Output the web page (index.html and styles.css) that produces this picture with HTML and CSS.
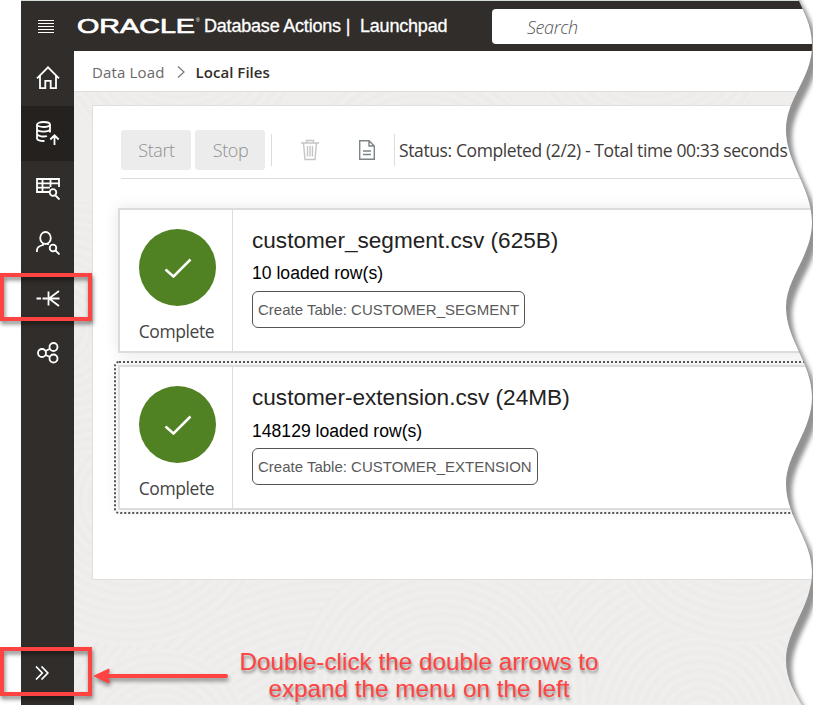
FILE: index.html
```html
<!DOCTYPE html>
<html lang="en">
<head>
<meta charset="utf-8">
<title>Database Actions | Launchpad</title>
<link rel="stylesheet" href="styles.css">
</head>
<body>
<div class="app">
  <header class="topbar">
    <svg class="burger" viewBox="0 0 16 14"><path d="M0 1.500h16M0 4.500h16M0 7.500h16M0 10.500h16M0 13.500h16" stroke="#fff" stroke-width="1"/></svg>
    <svg class="logo" viewBox="0 0 124 24"><text class="logo-text" x="0" y="19" textLength="118" lengthAdjust="spacingAndGlyphs">ORACLE</text><text class="logo-reg" x="119" y="8">®</text></svg>
    <span class="product">Database Actions |</span>
    <span class="page-name">Launchpad</span>
    <div class="search"><span>Search</span></div>
  </header>
  <div class="body">
    <nav class="sidebar">
      <div class="nav-item"><svg viewBox="0 0 24 24"><path d="M1 12.300 12 1.300l11 11M4 10v12.200h5.300v-7.400h5.400v7.400H20V10"/></svg></div>
      <div class="nav-item active"><svg viewBox="0 0 24 24"><ellipse cx="7.500" cy="3.500" rx="6.500" ry="2.500"/><path d="M1 3.500v14c0 1.700 3 2.600 7.500 2.500M14 3.500v8M1 8.300c1 3 12 3 13 0M1 13c1 2.500 7 3 10 2M18.500 24v-9.500M14.300 18.500l4.200-4.200 4.200 4.200"/></svg></div>
      <div class="nav-item"><svg viewBox="0 0 24 24"><path d="M13 16H1V3h22v8M1 7.300h22M1 11.700h13M6.500 3v13M14.500 3v8M19.500 19.500l4 4"/><circle cx="17" cy="16.500" r="3.300"/></svg></div>
      <div class="nav-item"><svg viewBox="0 0 24 24"><ellipse cx="9.500" cy="7" rx="5.300" ry="6"/><path d="M1 21v-2c0-3 2-4 6-5v-1.700M12 12.300V14M19.500 19.500l4 4"/><circle cx="17" cy="17" r="3.300"/></svg></div>
      <div class="nav-item"><svg viewBox="0 0 24 24"><path d="M.5 12.500h4.500M6.500 12.500h5M12.500 5.500v14M12.500 12.500h11M23 5 13 12.500 23 20"/></svg></div>
      <div class="nav-item"><svg viewBox="0 0 24 24"><circle cx="6" cy="12" r="4"/><circle cx="17.500" cy="6" r="4"/><circle cx="17.500" cy="17.500" r="4"/><path d="M9.500 10 14 7.800M9.500 14l4.500 2"/></svg></div>
      <div class="expander"><svg viewBox="0 0 14 14"><path d="M1 .5 7.300 7 1 13.500M6.500 .5 12.800 7l-6.300 6.500"/></svg></div>
    </nav>
    <main class="main">
      <svg class="texture" viewBox="74 92 739 613">
        <defs>
          <radialGradient id="rings" gradientUnits="userSpaceOnUse" cx="0" cy="0" r="9" spreadMethod="repeat">
            <stop offset="0" stop-color="#f0efee"/><stop offset=".5" stop-color="#ecebea"/><stop offset="1" stop-color="#f0efee"/>
          </radialGradient>
        </defs>
        <g fill="url(#rings)">
          <circle r="300" transform="translate(330 820)"/>
          <circle r="270" transform="translate(560 790)"/>
          <circle r="190" transform="translate(700 720)"/>
          <circle r="145" transform="translate(130 500)"/>
          <circle r="145" transform="translate(740 500)"/>
          <circle r="150" transform="translate(440 700)"/>
          <circle r="90" transform="translate(160 740)"/>
          <circle r="130" transform="translate(60 330)"/>
          <circle r="130" transform="translate(180 30)"/>
          <circle r="130" transform="translate(420 190)"/>
          <circle r="130" transform="translate(650 20)"/>
        </g>
      </svg>
      <div class="crumbs"><span>Data Load</span><svg viewBox="0 0 8 12"><path d="M1 .5 7 6l-6 5.500"/></svg><b>Local Files</b></div>
      <section class="panel">
        <div class="toolbar">
          <button>Start</button>
          <button>Stop</button>
          <i class="sep"></i>
          <svg class="trash" viewBox="0 0 18 22"><path d="M0 4h18M5.500 4V1.500h7V4M2.500 4l1.500 16.500h10L15.500 4M6.500 7v10.500M9 7v10.500M11.500 7v10.500"/></svg>
          <svg class="doc" viewBox="0 0 16 20"><path d="M.7.700H10l5.300 5.300v13.300H.7zM10 .7V6h5.300M4 11h8M4 14.500h8"/></svg>
          <i class="sep"></i>
          <span class="status">Status: Completed (2/2) - Total time 00:33 seconds</span>
        </div>
        <div class="cards">
          <article class="card">
            <div class="state"><div class="disc"><svg viewBox="0 0 28 20"><path d="M1.500 11.500l8 7L26.500 1.500"/></svg></div><span>Complete</span></div>
            <div class="info"><h2>customer_segment.csv (625B)</h2><p>10 loaded row(s)</p><span class="chip">Create Table: CUSTOMER_SEGMENT</span></div>
          </article>
          <article class="card focused">
            <div class="state"><div class="disc"><svg viewBox="0 0 28 20"><path d="M1.500 11.500l8 7L26.500 1.500"/></svg></div><span>Complete</span></div>
            <div class="info"><h2>customer-extension.csv (24MB)</h2><p>148129 loaded row(s)</p><span class="chip">Create Table: CUSTOMER_EXTENSION</span></div>
          </article>
        </div>
      </section>
    </main>
  </div>
</div>

<svg class="torn" viewBox="0 0 40 705">
  <defs>
    <path id="paper" d="M13 -44C13 -22 19 -10 25 0L26 1C29 9 39 24 39 45C39 79 13 98 13 130C13 163 39 188 39 222C39 256 13 278 13 307C13 340 39 363 39 397C39 431 13 454 13 484C13 517 39 540 39 572C39 606 13 630 13 660C13 680 22 693 29 705L42 730H70V-60z"/>
    <clipPath id="outside"><use href="#paper"/></clipPath>
    <filter id="soft" x="-50%" y="-5%" width="200%" height="110%"><feGaussianBlur stdDeviation="2"/></filter>
  </defs>
  <g clip-path="url(#outside)">
    <rect width="40" height="705" fill="#929292"/>
    <use href="#paper" x="6" y="8" fill="#fff" filter="url(#soft)"/>
  </g>
</svg>

<div class="mark mark-model"></div>
<div class="mark mark-expand"></div>
<svg class="arrow" viewBox="0 0 140 24"><path d="M12 12h121" stroke-width="4" stroke-linecap="round"/><path d="M1 12 16 5v3.500L12 12l4 3.500V19z" fill="#ff4242" stroke-width="1"/></svg>
<div class="note"><div>Double-click the double arrows to</div><div>expand the menu on the left</div></div>
</body>
</html>
```
FILE: styles.css
```css
* { box-sizing: border-box; }
body { margin: 0; width: 813px; height: 724px; overflow: hidden; position: relative; background: #fff; font-family: "Liberation Sans", Arial, sans-serif; }
svg { display: block; fill: none; flex: none; }
.app { margin-left: 21px; width: 792px; height: 705px; border-top: 1px solid #d3dcda; overflow: hidden; }

.topbar { height: 50px; background: #312d2a; display: flex; align-items: center; color: #fff; white-space: nowrap; }
.topbar > * { flex: none; }
.burger { width: 16px; height: 14px; margin-left: 17px; }
.logo { width: 124px; height: 24px; margin-left: 23px; overflow: visible; fill: #fff; }
.logo-text { font: 400 20.5px "Liberation Sans", sans-serif; stroke: #fff; stroke-width: .7px; }
.logo-reg { font-size: 5px; }
.product { margin-left: 3px; width: 156px; font-size: 18px; letter-spacing: -.2px; -webkit-text-stroke: .3px #fff; }
.page-name { font-size: 18px; letter-spacing: -.2px; width: 132px; -webkit-text-stroke: .3px #fff; }
.search { width: 330px; height: 35px; border-radius: 4px; background: #fff; display: flex; align-items: center; padding-left: 35px; padding-top: 2px; color: #555; font: italic 300 18px "Open Sans", sans-serif; letter-spacing: -.4px; }

.body { display: flex; height: 654px; }
.sidebar { width: 53px; flex: none; background: #312d2a; display: flex; flex-direction: column; }
.nav-item { height: 55px; display: flex; align-items: center; justify-content: center; padding-bottom: 2px; }
.nav-item svg { width: 24px; height: 24px; stroke: #fff; stroke-width: 1.8; }
.active { background: #25211e; }
.expander { margin-top: auto; margin-bottom: 25px; padding-left: 14px; }
.expander svg { width: 14px; height: 14px; stroke: #fff; stroke-width: 1.7; }

.main { flex: 1; position: relative; background: #efeeed; }
.texture { position: absolute; left: 0; top: 41px; width: 739px; height: 613px; }
.crumbs { position: relative; height: 41px; border-bottom: 1px solid #dfdedd; background: #fff; display: flex; align-items: center; padding: 2px 0 0 18px; font: 400 15px "Open Sans", sans-serif; color: #6b6867; }
.crumbs span { letter-spacing: .15px; }
.crumbs svg { width: 8px; height: 12px; margin: 0 11px 0 12px; stroke: #777; stroke-width: 1.2; }
.crumbs b { font-weight: 600; color: #312d2a; letter-spacing: .05px; }

.panel { position: relative; margin: 13px 0 0 18px; height: 475px; border: 1px solid #e0dfde; background: #fff; padding: 24px 0 0 28px; }
.toolbar { height: 49px; border-bottom: 1px solid #dedede; display: flex; align-items: flex-start; white-space: nowrap; }
.toolbar button { width: 70px; height: 40px; margin: 0 4px 0 0; padding: 0 0 0 1px; border: 0; border-radius: 3px; background: #ececec; color: #8f8f8f; font: 300 18px "Open Sans", sans-serif; letter-spacing: -.4px; }
.sep { width: 1px; height: 32px; margin: 4px 0 0 2px; background: #dcdcdc; }
.trash { width: 18px; height: 22px; margin: 9px 0 0 29px; stroke: #c5c5c7; stroke-width: 1.4; }
.doc { width: 16px; height: 20px; margin: 10px 17px 0 40px; stroke: #7d8588; stroke-width: 1.4; }
.status { margin-left: 4px; font: 400 17.5px/40px "Open Sans", sans-serif; letter-spacing: -.39px; color: #403c39; }

.cards { display: flex; flex-direction: column; gap: 12px; margin: 29px 0 0 -3px; }
.card { height: 145px; width: 720px; border: 2px solid #dcdcdc; display: flex; background: #fff; box-shadow: 0 0 14px rgba(0,0,0,.1); }
.focused { outline: 2px dotted #555; outline-offset: 2px; border-radius: 1px; }
.state { width: 113px; border-right: 1px solid #dcdcdc; display: flex; flex-direction: column; align-items: center; padding-top: 19px; padding-left: 2px; font: 400 17.5px/24px "Open Sans", sans-serif; letter-spacing: -.4px; color: #444; }
.state span { margin: 13px 1px 0 0; }
.disc { width: 77px; height: 77px; border-radius: 50%; background: #508223; display: flex; align-items: center; justify-content: center; padding-left: 2px; }
.disc svg { width: 28px; height: 20px; stroke: #fff; stroke-width: 2.5; }
.info { padding: 17px 0 0 19px; white-space: nowrap; }
.info h2 { margin: 0; font: 400 22.6px/28px "Liberation Sans", sans-serif; color: #222; }
.info p { margin: 6px 0 6px; font-size: 17.6px; line-height: 24px; color: #000; }
.focused p { margin: 7px 0 5px; }
.chip { display: inline-block; height: 37px; border: 1px solid #555; border-radius: 6px; padding: 0 5px; font-size: 15px; line-height: 35px; color: #5a5a5a; }

.torn { position: absolute; left: 773px; top: 0; width: 40px; height: 705px; }
.mark { position: absolute; left: 0; width: 92px; border: 4px solid #ff4242; filter: drop-shadow(1px 3px 2px rgba(0,0,0,.5)); }
.mark-model { top: 273px; height: 48px; }
.mark-expand { top: 647px; height: 49px; }
.arrow { position: absolute; left: 93px; top: 664px; width: 140px; height: 24px; stroke: #ff4242; filter: drop-shadow(1px 3px 2px rgba(0,0,0,.45)); }
.note { position: absolute; left: 239px; top: 648px; width: 360px; height: 57px; overflow: hidden; text-align: center; white-space: nowrap; font-size: 24.3px; line-height: 27px; color: #ff4242; text-shadow: 1px 3px 3px rgba(0,0,0,.4); }
```
